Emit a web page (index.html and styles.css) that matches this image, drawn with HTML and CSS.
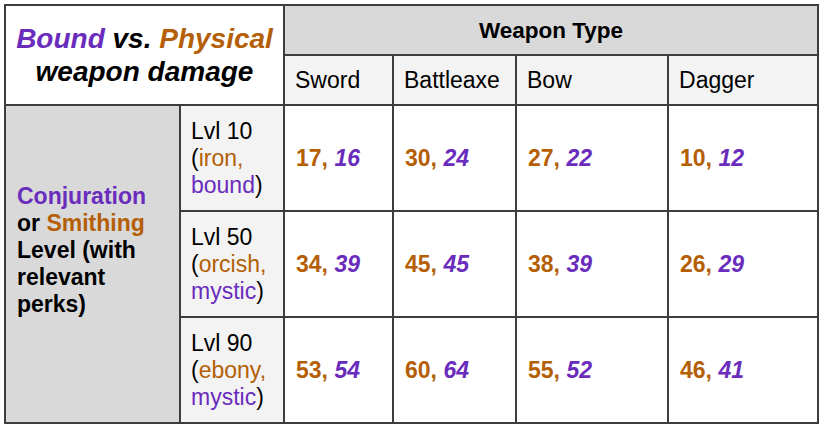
FILE: index.html
```html
<!DOCTYPE html>
<html>
<head>
<meta charset="utf-8">
<link rel="stylesheet" href="styles.css">
</head>
<body>
<table class="dmg">
  <colgroup>
    <col class="c-skill">
    <col class="c-lvl">
    <col class="c-sword">
    <col class="c-axe">
    <col class="c-bow">
    <col class="c-dagger">
  </colgroup>
  <tr class="r-head">
    <th class="title" colspan="2" rowspan="2"><span class="p">Bound</span> vs. <span class="o">Physical</span><br>weapon damage</th>
    <th class="wtype" colspan="4">Weapon Type</th>
  </tr>
  <tr class="r-sub">
    <th class="sub">Sword</th>
    <th class="sub">Battleaxe</th>
    <th class="sub">Bow</th>
    <th class="sub">Dagger</th>
  </tr>
  <tr class="r-data">
    <th class="skill" rowspan="3"><span class="p">Conjuration</span><br>or <span class="o">Smithing</span><br>Level (with<br>relevant<br>perks)</th>
    <th class="lvl">Lvl 10<br>(<span class="o">iron,</span><br><span class="p">bound</span>)</th>
    <td class="num"><span class="o">17, </span><i class="p">16</i></td>
    <td class="num"><span class="o">30, </span><i class="p">24</i></td>
    <td class="num"><span class="o">27, </span><i class="p">22</i></td>
    <td class="num"><span class="o">10, </span><i class="p">12</i></td>
  </tr>
  <tr class="r-data">
    <th class="lvl">Lvl 50<br>(<span class="o">orcish,</span><br><span class="p">mystic</span>)</th>
    <td class="num"><span class="o">34, </span><i class="p">39</i></td>
    <td class="num"><span class="o">45, </span><i class="p">45</i></td>
    <td class="num"><span class="o">38, </span><i class="p">39</i></td>
    <td class="num"><span class="o">26, </span><i class="p">29</i></td>
  </tr>
  <tr class="r-data">
    <th class="lvl">Lvl 90<br>(<span class="o">ebony,</span><br><span class="p">mystic</span>)</th>
    <td class="num"><span class="o">53, </span><i class="p">54</i></td>
    <td class="num"><span class="o">60, </span><i class="p">64</i></td>
    <td class="num"><span class="o">55, </span><i class="p">52</i></td>
    <td class="num"><span class="o">46, </span><i class="p">41</i></td>
  </tr>
</table>
</body>
</html>
```

FILE: styles.css
```css
html, body {
  margin: 0;
  padding: 0;
  background: #ffffff;
}

body {
  padding: 4px 0 0 4px;
  font-family: "Liberation Sans", Arial, sans-serif;
  color: #000000;
}

.dmg {
  border-collapse: collapse;
  table-layout: fixed;
  width: 815px;
  font-size: 23px;
  line-height: 27px;
}

.dmg th,
.dmg td {
  border: 2px solid #3d3d3d;
  padding: 0 10px;
  vertical-align: middle;
  text-align: left;
  font-weight: normal;
}

.c-skill { width: 175px; }
.c-lvl { width: 104px; }
.c-sword { width: 109px; }
.c-axe { width: 123px; }
.c-bow { width: 152px; }
.c-dagger { width: 150px; }

.r-head { height: 50px; }
.r-sub { height: 50px; }
.r-data { height: 106px; }

.dmg .title {
  background: #ffffff;
  text-align: center;
  font-weight: bold;
  font-style: italic;
  font-size: 28px;
  line-height: 33px;
  padding: 0 2px;
}

.dmg .wtype {
  background: #d9d9d9;
  text-align: center;
  font-weight: bold;
  font-size: 22.5px;
}

.dmg .sub {
  background: #f3f3f3;
}

.dmg .skill {
  background: #d9d9d9;
  font-weight: bold;
  padding: 0 8px 27px 11px;
}

.dmg .lvl {
  background: #f3f3f3;
}

.dmg .num {
  background: #ffffff;
  font-weight: bold;
  padding-left: 11px;
}

.p { color: #6a2cbc; }
.o { color: #b45f06; }

.num i {
  font-style: italic;
}
```
